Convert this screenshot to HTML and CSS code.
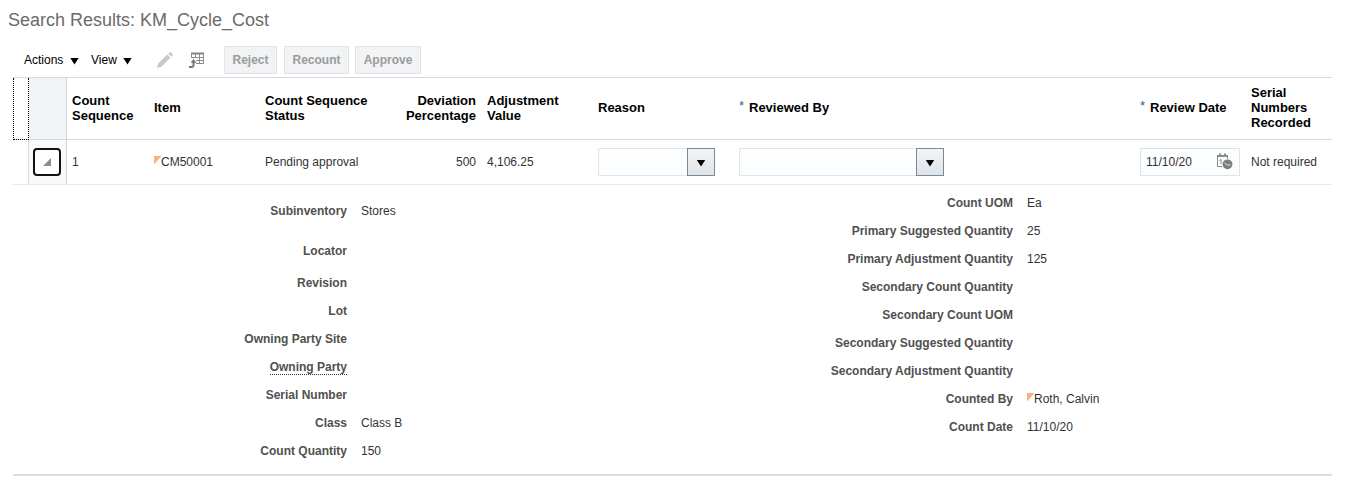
FILE: index.html
```html
<!DOCTYPE html>
<html lang="en">
<head>
<meta charset="utf-8">
<title>Search Results: KM_Cycle_Cost</title>
<link rel="stylesheet" href="styles.css">
</head>
<body>
<h1 class="title"><span>Search Results: KM_Cycle_Cost</span></h1>
<div class="toolbar">
  <span class="menu actions"><span>Actions</span><i class="caret"></i></span>
  <span class="menu view"><span>View</span><i class="caret"></i></span>
  <svg class="pencil" width="18" height="18" viewBox="0 0 18 18"><path d="M1 17 2.2 12.5 11.2 3.6 14.4 6.8 5.4 15.8Z M12.2 2.7 13.5 1.3Q14.5.7 15.5 1.7L16.4 2.6Q17.2 3.6 16.6 4.5L15.3 5.8Z" fill="#c8c8c8"/></svg>
  <svg class="detach" width="16" height="17" viewBox="0 0 16 17"><path d="M2 .5h13v2H2z" fill="#858585"/><path d="M2.5 2v4M6.5 2v4M10.5 2v9M14.5 2v9M2 5.5h13M7 8.5h8M7 11.5h8" fill="none" stroke="#8c8c8c"/><path d="M0 15h2.5Q4.5 15 4.5 13V10" fill="none" stroke="#777" stroke-width="2"/><path d="M1.5 10.7 4.5 7l3 3.7z" fill="#777"/></svg>
  <button class="btn reject" disabled>Reject</button>
  <button class="btn recount" disabled>Recount</button>
  <button class="btn approve" disabled>Approve</button>
</div>
<div class="table">
  <div class="row head">
    <div class="handle"></div>
    <div class="expand"></div>
    <div class="cell"><span>Count<br>Sequence</span></div>
    <div class="cell item">Item</div>
    <div class="cell"><span>Count Sequence<br>Status</span></div>
    <div class="cell num"><span>Deviation<br>Percentage</span></div>
    <div class="cell"><span>Adjustment<br>Value</span></div>
    <div class="cell">Reason</div>
    <div class="cell"><b class="req">*</b><span>Reviewed By</span></div>
    <div class="cell"><b class="req">*</b><span>Review Date</span></div>
    <div class="cell"><span>Serial<br>Numbers<br>Recorded</span></div>
  </div>
  <div class="row data">
    <div class="handle"></div>
    <div class="expand"><div class="toggle"><svg width="8" height="8" viewBox="0 0 8 8"><path d="M8 0V8H0Z" fill="#8b8b8b"/></svg></div></div>
    <div class="cell">1</div>
    <div class="cell item"><i class="flag"></i><span>CM50001</span></div>
    <div class="cell">Pending approval</div>
    <div class="cell num">500</div>
    <div class="cell">4,106.25</div>
    <div class="cell"><div class="combo reason"><span class="drop"><i class="caret"></i></span></div></div>
    <div class="cell"><div class="combo reviewer"><span class="drop"><i class="caret"></i></span></div></div>
    <div class="cell"><div class="date"><span>11/10/20</span>
      <svg width="17" height="17" viewBox="0 0 17 17"><path d="M1.5 3.5V13.5H6M11.5 3.5V6" fill="none" stroke="#8c8c8c"/><path d="M1 2h11v2H1zM3 .5h2v2H3zM8 .5h2v2H8z" fill="#8c8c8c"/><path d="M3.5 7.5 5 6.5V11" fill="none" stroke="#858585"/><circle cx="11.5" cy="11.3" r="4.9" fill="#7d7d7d"/><path d="M8.5 10 11 12H14.5" fill="none" stroke="#e4e4e4"/></svg>
    </div></div>
    <div class="cell">Not required</div>
  </div>
</div>
<div class="details">
  <dl class="left">
    <dt>Subinventory</dt><dd>Stores</dd>
    <dt class="loc">Locator</dt><dd></dd>
    <dt>Revision</dt><dd></dd>
    <dt>Lot</dt><dd></dd>
    <dt>Owning Party Site</dt><dd></dd>
    <dt><span class="hint">Owning Party</span></dt><dd></dd>
    <dt>Serial Number</dt><dd></dd>
    <dt>Class</dt><dd>Class B</dd>
    <dt>Count Quantity</dt><dd>150</dd>
  </dl>
  <dl class="right">
    <dt>Count UOM</dt><dd>Ea</dd>
    <dt>Primary Suggested Quantity</dt><dd>25</dd>
    <dt>Primary Adjustment Quantity</dt><dd>125</dd>
    <dt>Secondary Count Quantity</dt><dd></dd>
    <dt>Secondary Count UOM</dt><dd></dd>
    <dt>Secondary Suggested Quantity</dt><dd></dd>
    <dt>Secondary Adjustment Quantity</dt><dd></dd>
    <dt>Counted By</dt><dd><i class="flag"></i><span>Roth, Calvin</span></dd>
    <dt>Count Date</dt><dd>11/10/20</dd>
  </dl>
</div>
</body>
</html>
```
FILE: styles.css
```css
* { box-sizing: border-box; }
body { margin: 0; background: #fff; color: #333; font: 12px/15px "Liberation Sans", Arial, sans-serif; overflow: hidden; }
.title { margin: 0; padding: 9px 0 0 8px; height: 43px; font-size: 18px; line-height: 22px; font-weight: 400; color: #6b6b6b; }
.toolbar { display: flex; align-items: center; height: 34px; padding-left: 24px; color: #000; }
.menu { display: flex; align-items: center; justify-content: space-between; }
.menu .caret { margin-top: 2px; }
.actions { width: 55px; margin-right: 12px; }
.view { width: 41px; margin-right: 24px; }
.caret { display: block; width: 9px; height: 7px; background: #000; clip-path: polygon(0 0, 100% 0, 50% 100%); }
.pencil { margin-right: 15px; flex: none; }
.detach { margin-right: 19px; flex: none; }
.btn { height: 28px; padding: 0; border: 1px solid #dfe3e7; border-radius: 1px; background: #f1f3f5; color: #9b9b9b; font: bold 12px "Liberation Sans", Arial, sans-serif; }
.reject { width: 53px; margin-right: 7px; }
.recount { width: 65px; margin-right: 6px; }
.approve { width: 66px; }
.table { width: 1319px; margin-left: 13px; border-top: 1px solid #d6d9dd; }
.row { display: grid; grid-template-columns: 16px 38px 81px 112px 111px 111px 111px 141px 401px 111px 86px; }
.head { height: 62px; color: #000; font-size: 13px; font-weight: 700; border-bottom: 1px solid #d6d9dd; }
.data { height: 45px; border-bottom: 1px solid #e7e9eb; }
.cell { display: flex; align-items: center; padding-left: 5px; white-space: nowrap; }
.item { padding-left: 6px; }
.num { justify-content: flex-end; text-align: right; padding: 0 6px 0 0; }
.head .cell { padding-bottom: 2px; }
.handle { border-right: 1px solid #d6dbe3; }
.head .handle { border: 1px dotted #000; border-top: 0; margin-bottom: -1px; }
.expand { border-right: 1px solid #d1d8e0; background: #f8f9fb; display: flex; align-items: center; padding-left: 4px; }
.head .expand { background: #f1f3f7; }
.toggle { width: 28px; height: 28px; border: 2px solid #111; border-radius: 4px; background: #fff; display: flex; align-items: center; justify-content: center; }
.req { width: 10px; color: #2b6399; font-size: 13px; font-weight: 400; margin-top: -4px; }
.flag { display: block; width: 8px; height: 9px; background: #f7b183; clip-path: polygon(0 0, 100% 0, 0 100%); margin: -4px -1px 0 0; }
.combo { height: 28px; border: 1px solid #dfe4e7; background: #fcfdfe; display: flex; justify-content: flex-end; }
.reason { width: 117px; }
.reviewer { width: 205px; }
.drop { width: 28px; height: 28px; margin: -1px; border: 1px solid #788a9a; background: linear-gradient(#f2f4f6, #dfe4e8); display: flex; align-items: center; justify-content: center; }
.drop .caret { margin-top: 2px; }
.date { width: 100px; height: 28px; border: 1px solid #d9e5eb; background: #fcfdfe; padding: 0 6px 0 5px; display: flex; align-items: center; justify-content: space-between; }
.date svg { margin-top: -2px; }
.details { display: flex; width: 1319px; height: 291px; margin-left: 13px; border-bottom: 2px solid #dcdcdc; }
dl { display: grid; grid-auto-rows: 28px; align-content: start; margin: 0; column-gap: 14px; }
.left { grid-template: 52px 32px / 334px 318px; }
.right { grid-template-columns: 334px 290px; padding-top: 4px; }
dt, dd { margin: 0; display: flex; align-items: center; white-space: nowrap; }
dt { justify-content: flex-end; font-weight: 700; color: #505050; }
.loc { padding-bottom: 4px; }
dd { color: #333; }
.hint { border-bottom: 1px dotted #333; line-height: 14px; }
```
